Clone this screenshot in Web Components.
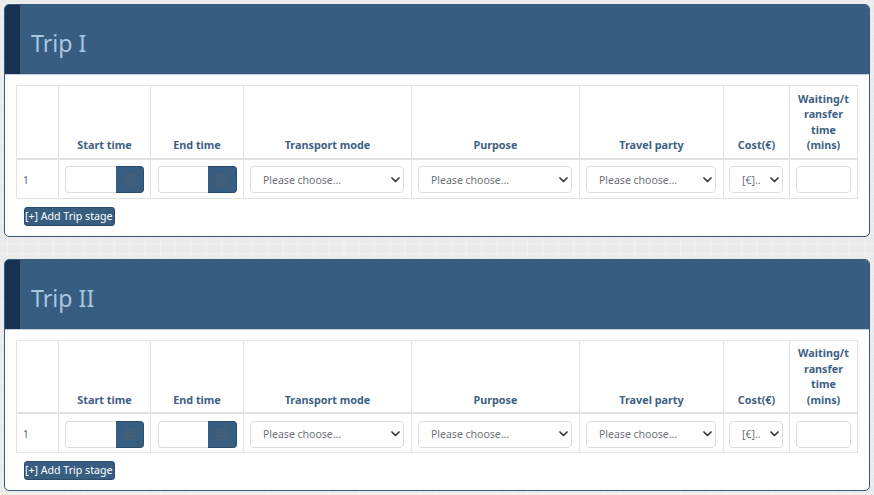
<!DOCTYPE html>
<html><head><meta charset="utf-8">
<style>
html,body{margin:0;padding:0;height:495px;overflow:hidden}
body{background-color:#ebebeb;background-image:linear-gradient(#f1f1f1 1px,transparent 1px),linear-gradient(90deg,#f1f1f1 1px,transparent 1px);background-size:15.300px 10px;background-position:7px 3px;font-family:"Noto Sans",sans-serif;}
trip-page{display:block}
</style></head><body>
<template id="card-t"><style>
:host{display:block;box-sizing:border-box;width:866px;height:232.6px;background:#fff;border:1px solid #37597d;border-radius:5px;overflow:hidden;margin-bottom:22px}
header{height:69px;background:#375d81;border-left:15px solid #183152;box-sizing:border-box;display:flex;align-items:flex-end;padding:0 0 15px 11px;box-shadow:0 1px 0 #c5d0db}
h2{margin:0;font:400 23.2px/32px "Noto Sans",sans-serif;color:#a8c6e2}
.body{padding:11px 12px 0 11px}
</style><header><h2><slot name="title"></slot></h2></header><div class="body"><slot></slot></div></template>

<template id="table-t"><style>
:host{display:block;font-family:"Noto Sans",sans-serif}
.grid{display:grid;grid-template-columns:42px 92px 93px 168px 168px 144px 66px 67px;grid-template-rows:73.8px 38px;width:842px;box-sizing:border-box;border:solid #e2e2e2;border-width:1px;height:113.8px}
.th{box-sizing:border-box;border-right:1px solid #e2e2e2;border-bottom:2px solid #e2e2e2;display:flex;align-items:flex-end;justify-content:center;text-align:center;font-size:10.8px;font-weight:700;line-height:15.4px;color:#3d6184;padding:0 6px 5.400px;overflow-wrap:anywhere}
.td{box-sizing:border-box;border-right:1px solid #e2e2e2;display:flex;align-items:center;padding:2px 6px 0;font-size:10px;color:#55606c}
.th.l,.td.l{border-right:0}
.td.s{--b:28px}
.td.e{padding-left:7px;--b:29px}
.td.c{padding-right:7px}
.td.k{padding-left:5px}
</style><div class="grid">
<div class="th"></div><div class="th">Start time</div><div class="th">End time</div><div class="th">Transport mode</div><div class="th">Purpose</div><div class="th">Travel party</div><div class="th">Cost(€)</div><div class="th l">Waiting/transfer time (mins)</div>
<div class="td">1</div><div class="td s"><date-field></date-field></div><div class="td e"><date-field></date-field></div><div class="td c"><choice-field>Please choose...</choice-field></div><div class="td c"><choice-field>Please choose...</choice-field></div><div class="td c"><choice-field>Please choose...</choice-field></div><div class="td k"><choice-field>[€]..</choice-field></div><div class="td l"><text-box></text-box></div>
</div></template>

<template id="date-t"><style>
:host{display:flex;box-sizing:border-box;width:79px;height:27px}
.f{flex:1;box-sizing:border-box;border:1px solid #dcdcdc;border-right:0;border-radius:4px 0 0 4px;background:#fff}
.b{box-sizing:border-box;width:var(--b,28px);background:#375d81;border:1px solid #2c4c6e;border-left:0;border-radius:0 4px 4px 0;display:flex;align-items:center;justify-content:center}
</style><div class="f"></div><div class="b"><svg width="11" height="12" viewBox="0 0 11 12" fill="none" stroke="#4d5f70" stroke-width="1"><rect x=".5" y="1.500" width="10" height="10" rx="1"/><path d="M.5 4.500h10M3 0v3M8 0v3M3.800 4.500v7M7.200 4.500v7M.5 8h10"/></svg></div></template>

<template id="choice-t"><style>
:host{display:flex;flex:1;box-sizing:border-box;height:27px;border:1px solid #dcdcdc;border-radius:4px;background:#fff;align-items:center;padding:0 3px 0 12px;font-size:10.5px;color:#6d7379;justify-content:space-between}
svg{flex:none}
</style><slot></slot><svg width="9" height="6" viewBox="0 0 9 6" fill="none" stroke="#343a40" stroke-width="1.700" stroke-linecap="round" stroke-linejoin="round"><path d="M1 1l3.500 3.500L8 1"/></svg></template>

<template id="box-t"><style>
:host{display:block;flex:1;box-sizing:border-box;height:27px;border:1px solid #dcdcdc;border-radius:4px;background:#fff}
</style></template>

<template id="btn-t"><style>
:host{display:inline-block;box-sizing:border-box;height:19px;width:91px;margin:8px 0 0 8px;background:#375d81;border:1px solid #2c4c6e;border-radius:3px;color:#fff;font:400 10.6px/16px "Noto Sans",sans-serif;text-align:left;white-space:nowrap}
</style><slot></slot></template>

<template id="page-t"><style>
:host{display:block;padding:4px 0 0 4px}
</style><slot></slot></template>

<trip-page>
<trip-card><span slot="title">Trip I</span><trip-table></trip-table><add-button>[+] Add Trip stage</add-button></trip-card>
<trip-card><span slot="title">Trip II</span><trip-table></trip-table><add-button>[+] Add Trip stage</add-button></trip-card>
</trip-page>
<script>
const def=(n,t)=>customElements.define(n,class extends HTMLElement{constructor(){super();this.attachShadow({mode:'open'}).appendChild(document.getElementById(t).content.cloneNode(true))}});
def('text-box','box-t');def('choice-field','choice-t');def('date-field','date-t');def('add-button','btn-t');def('trip-table','table-t');def('trip-card','card-t');def('trip-page','page-t');
</script>
</body></html>
